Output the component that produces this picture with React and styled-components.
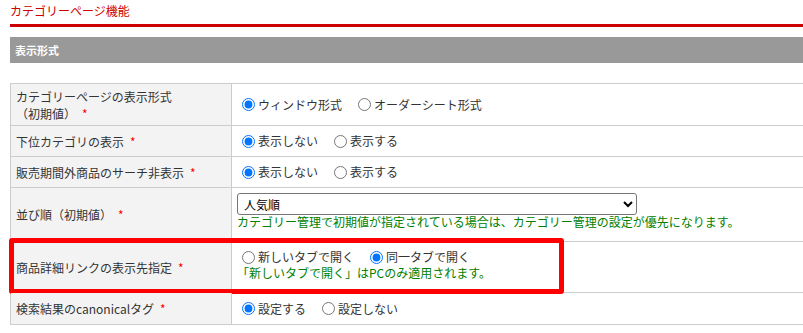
import React from "react";
import styled, { createGlobalStyle } from "styled-components";

const GlobalStyle = createGlobalStyle`
  body {
    margin: 0;
    background: #fff;
    overflow: hidden;
    font-family: "Noto Sans CJK JP", "Noto Sans", sans-serif;
    font-size: 12px;
    color: #333;
  }
`;

const Page = styled.div`
  width: 830px;
  padding-left: 10px;
`;

const Title = styled.h2`
  margin: 0;
  padding: 3px 0 5px;
  font-size: 12px;
  font-weight: normal;
  line-height: 16px;
  color: #cc0000;
  border-bottom: 3px solid #cc0000;
`;

const SectionBar = styled.h3`
  margin: 10px 0 0;
  height: 26px;
  padding-left: 5px;
  display: flex;
  align-items: center;
  background: #999999;
  color: #fff;
  font-size: 11px;
  font-weight: bold;
`;

const Table = styled.div`
  margin-top: 20px;
  border-top: 1px solid #cccccc;
  border-left: 1px solid #cccccc;
`;

const Row = styled.div`
  position: relative;
  display: grid;
  grid-template-columns: 221px 1fr;
  height: ${(p) => p.$h}px;
`;

const LabelCell = styled.div`
  display: flex;
  flex-direction: column;
  justify-content: center;
  padding: 0 5px;
  background: #f3f3f3;
  border-right: 1px solid #cccccc;
  border-bottom: 1px solid #cccccc;
`;

const LabelLine = styled.div`
  display: flex;
  align-items: center;
  height: 17px;
  line-height: 17px;
  white-space: nowrap;
`;

const ValueCell = styled.div`
  display: flex;
  flex-direction: column;
  justify-content: ${(p) => (p.$top ? "flex-start" : "center")};
  padding: ${(p) => (p.$top ? `${p.$top}px 5px 0` : "0 5px")};
  border-bottom: 1px solid #cccccc;
`;

const Required = styled.span`
  color: #ff0000;
  margin-left: 6px;
`;

const Options = styled.div`
  display: flex;
  align-items: center;
  height: 18px;
`;

const Option = styled.label`
  display: inline-flex;
  align-items: center;
  margin-right: 11px;
  line-height: 18px;
  cursor: pointer;

  input {
    width: 13px;
    height: 13px;
    margin: 0 3px 0 5px;
  }
`;

const Select = styled.select`
  width: 400px;
  height: 22px;
  padding: 0 2px;
  border: 1px solid #767676;
  border-radius: 3px;
  background: #fff;
  color: #000;
  font-family: inherit;
  font-size: 12px;
`;

const Note = styled.div`
  color: #008000;
  line-height: ${(p) => p.$lh || 14}px;
`;

const Highlight = styled.div`
  position: absolute;
  left: -2px;
  top: -4px;
  width: 555px;
  height: 56px;
  box-sizing: border-box;
  border: 5px solid #ff0000;
  border-radius: 3px;
  pointer-events: none;
`;

const Label = ({ lines }) => (
  <LabelCell>
    {lines.map((line, i) => (
      <LabelLine key={i}>
        {line}
        {i === lines.length - 1 && <Required>*</Required>}
      </LabelLine>
    ))}
  </LabelCell>
);

const Radios = ({ name, items, checked }) => (
  <Options>
    {items.map((item) => (
      <Option key={item}>
        <input type="radio" name={name} defaultChecked={item === checked} />
        {item}
      </Option>
    ))}
  </Options>
);

const App = () => {
  return (
    <>
      <GlobalStyle />
      <Page>
        <Title>カテゴリーページ機能</Title>
        <SectionBar>表示形式</SectionBar>
        <Table>
          <Row $h={42}>
            <Label lines={["カテゴリーページの表示形式", "（初期値）"]} />
            <ValueCell>
              <Radios
                name="view"
                items={["ウィンドウ形式", "オーダーシート形式"]}
                checked="ウィンドウ形式"
              />
            </ValueCell>
          </Row>
          <Row $h={31}>
            <Label lines={["下位カテゴリの表示"]} />
            <ValueCell>
              <Radios name="sub" items={["表示しない", "表示する"]} checked="表示しない" />
            </ValueCell>
          </Row>
          <Row $h={31}>
            <Label lines={["販売期間外商品のサーチ非表示"]} />
            <ValueCell>
              <Radios name="outside" items={["表示しない", "表示する"]} checked="表示しない" />
            </ValueCell>
          </Row>
          <Row $h={54}>
            <Label lines={["並び順（初期値）"]} />
            <ValueCell $top={5}>
              <Select defaultValue="popular">
                <option value="popular">人気順</option>
                <option value="new">新着順</option>
                <option value="cheap">価格の安い順</option>
              </Select>
              <Note $lh={13}>
                カテゴリー管理で初期値が指定されている場合は、カテゴリー管理の設定が優先になります。
              </Note>
            </ValueCell>
          </Row>
          <Row $h={51}>
            <Label lines={["商品詳細リンクの表示先指定"]} />
            <ValueCell $top={6}>
              <Radios
                name="target"
                items={["新しいタブで開く", "同一タブで開く"]}
                checked="同一タブで開く"
              />
              <Note>「新しいタブで開く」はPCのみ適用されます。</Note>
            </ValueCell>
            <Highlight />
          </Row>
          <Row $h={32}>
            <Label lines={["検索結果のcanonicalタグ"]} />
            <ValueCell>
              <Radios name="canonical" items={["設定する", "設定しない"]} checked="設定する" />
            </ValueCell>
          </Row>
        </Table>
      </Page>
    </>
  );
};

export default App;
